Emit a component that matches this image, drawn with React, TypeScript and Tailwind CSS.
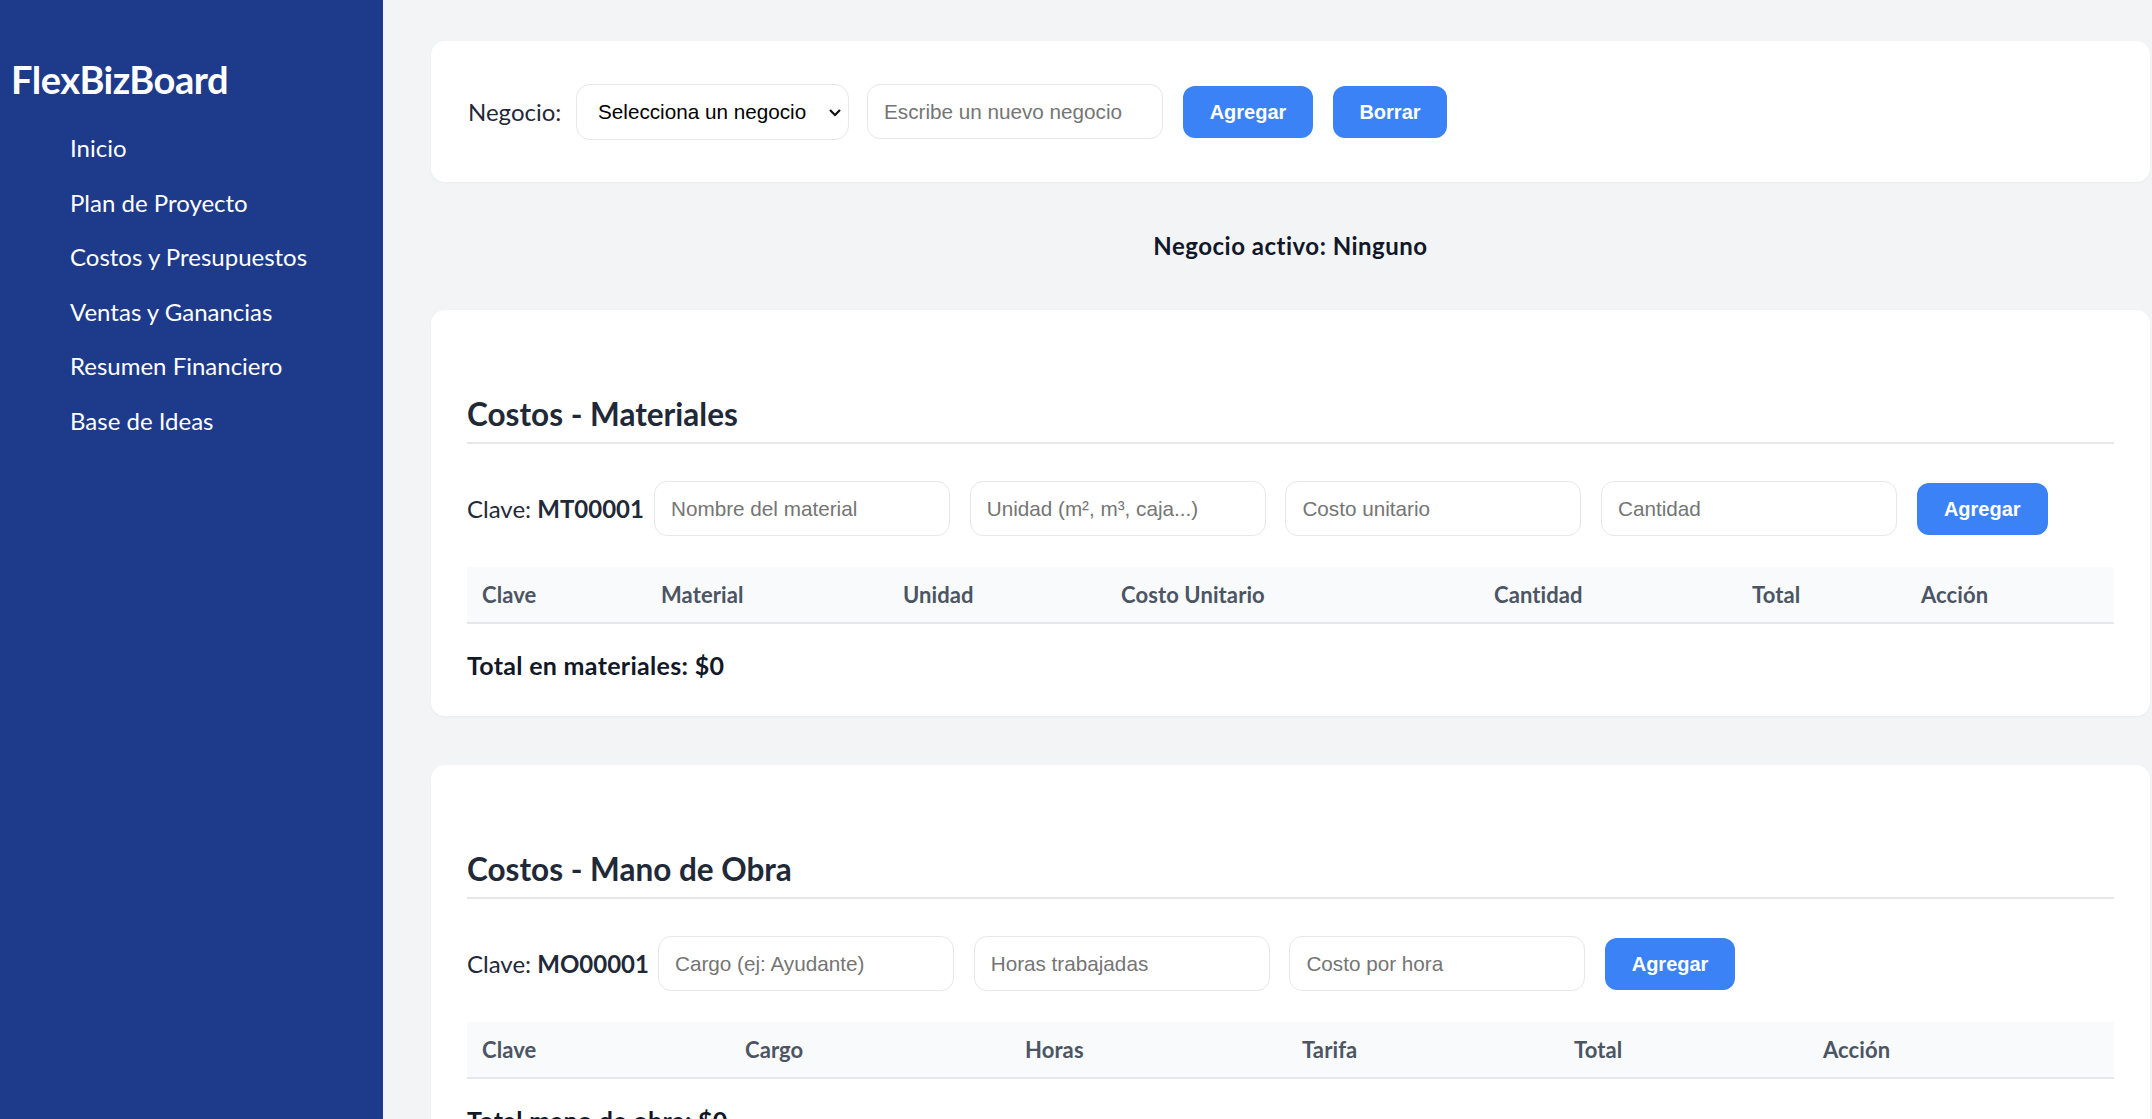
import React from "react";

const navItems = [
  "Inicio",
  "Plan de Proyecto",
  "Costos y Presupuestos",
  "Ventas y Ganancias",
  "Resumen Financiero",
  "Base de Ideas",
];

const materialCols = [
  { label: "Clave", w: "w-[179px]" },
  { label: "Material", w: "w-[242px]" },
  { label: "Unidad", w: "w-[218px]" },
  { label: "Costo Unitario", w: "w-[373px]" },
  { label: "Cantidad", w: "w-[258px]" },
  { label: "Total", w: "w-[169px]" },
  { label: "Acción", w: "w-[208px]" },
];

const laborCols = [
  { label: "Clave", w: "w-[263px]" },
  { label: "Cargo", w: "w-[280px]" },
  { label: "Horas", w: "w-[277px]" },
  { label: "Tarifa", w: "w-[272px]" },
  { label: "Total", w: "w-[249px]" },
  { label: "Acción", w: "w-[306px]" },
];

const arial = "font-['Liberation_Sans',Arial,sans-serif]";

function Field({ placeholder }: { placeholder: string }) {
  return (
    <input
      placeholder={placeholder}
      className={`h-[55px] w-[296px] rounded-[13px] border border-[#e5e7eb] bg-white px-[16px] ${arial} text-[20.7px] text-black outline-none placeholder:text-[#757575]`}
    />
  );
}

function BlueButton({ children, w }: { children: React.ReactNode; w: string }) {
  return (
    <button
      className={`h-[52px] ${w} rounded-[12px] bg-[#3b82f6] ${arial} text-[20px] font-bold text-white`}
    >
      {children}
    </button>
  );
}

function HeaderTable({ cols }: { cols: { label: string; w: string }[] }) {
  return (
    <table className="mt-[31px] w-full table-fixed border-collapse">
      <thead>
        <tr className="bg-[#f9fafb]">
          {cols.map((c) => (
            <th
              key={c.label}
              className={`${c.w} h-[56px] border-b-2 border-[#e5e7eb] pl-[15px] text-left text-[22px] font-bold tracking-[0.1px] text-[#4b5563]`}
            >
              {c.label}
            </th>
          ))}
        </tr>
      </thead>
      <tbody></tbody>
    </table>
  );
}

export default function App() {
  return (
    <div className="flex h-screen overflow-hidden bg-[#f3f4f6] font-['Lato','Noto_Sans',sans-serif] text-[#1f2937]">
      <aside className="w-[383px] shrink-0 bg-[#1e3a8a] pl-[11px] pt-[55px] text-white">
        <h1 className="text-[38px] font-bold leading-[48px] tracking-[-0.5px]">FlexBizBoard</h1>
        <ul className="mt-[18px] pl-[59px]">
          {navItems.map((item) => (
            <li key={item} className="text-[24px] leading-[54.6px]">
              {item}
            </li>
          ))}
        </ul>
      </aside>

      <main className="flex-1 pl-[48px] pr-[4px] pt-[41px]">
        <div className="flex h-[141px] items-center rounded-[14px] bg-white px-[37px] shadow-[0_1px_3px_rgba(0,0,0,0.04)]">
          <label className="w-[108px] text-[24px]">Negocio:</label>
          <div className="relative">
            <select
              className={`h-[56px] w-[273px] appearance-none rounded-[14px] border border-[#e5e7eb] bg-white pl-[21px] ${arial} text-[20.7px] text-black outline-none`}
            >
              <option>Selecciona un negocio</option>
            </select>
            <svg
              className="pointer-events-none absolute right-[7px] top-[24px] h-[9px] w-[14px]"
              viewBox="0 0 14 9"
              fill="none"
              stroke="#111"
              strokeWidth="2.2"
            >
              <path d="M2 2l5 5 5-5" />
            </svg>
          </div>
          <div className="ml-[18px]">
            <Field placeholder="Escribe un nuevo negocio" />
          </div>
          <div className="ml-[20px] flex gap-[20px]">
            <BlueButton w="w-[130px]">Agregar</BlueButton>
            <BlueButton w="w-[114px]">Borrar</BlueButton>
          </div>
        </div>

        <p className="my-[48px] text-center text-[24px] font-bold leading-[32px] tracking-[0.5px] text-[#111827]">
          Negocio activo: Ninguno
        </p>

        <section className="rounded-[14px] bg-white px-[36px] pb-[35px] pt-[36px] shadow-[0_1px_3px_rgba(0,0,0,0.04)]">
          <h2 className="mt-[48px] border-b-2 border-[#e5e7eb] pb-[8px] text-[31.5px] font-bold leading-[40px]">
            Costos - Materiales
          </h2>
          <div className="mt-[37px] flex items-center">
            <span className="w-[187px] text-[24px]">
              Clave: <b>MT00001</b>
            </span>
            <div className="flex items-center gap-[19.7px]">
              <Field placeholder="Nombre del material" />
              <Field placeholder="Unidad (m², m³, caja...)" />
              <Field placeholder="Costo unitario" />
              <Field placeholder="Cantidad" />
              <BlueButton w="w-[131px]">Agregar</BlueButton>
            </div>
          </div>
          <HeaderTable cols={materialCols} />
          <p className="mt-[25px] text-[25px] font-bold leading-[32px] tracking-[0.3px] text-[#111827]">
            Total en materiales: $0
          </p>
        </section>

        <section className="mt-[49px] rounded-[14px] bg-white px-[36px] pb-[35px] pt-[36px] shadow-[0_1px_3px_rgba(0,0,0,0.04)]">
          <h2 className="mt-[48px] border-b-2 border-[#e5e7eb] pb-[8px] text-[31.5px] font-bold leading-[40px]">
            Costos - Mano de Obra
          </h2>
          <div className="mt-[37px] flex items-center">
            <span className="w-[191px] text-[24px]">
              Clave: <b>MO00001</b>
            </span>
            <div className="flex items-center gap-[19.7px]">
              <Field placeholder="Cargo (ej: Ayudante)" />
              <Field placeholder="Horas trabajadas" />
              <Field placeholder="Costo por hora" />
              <BlueButton w="w-[130px]">Agregar</BlueButton>
            </div>
          </div>
          <HeaderTable cols={laborCols} />
          <p className="mt-[25px] text-[25px] font-bold leading-[32px] tracking-[0.3px] text-[#111827]">
            Total mano de obra: $0
          </p>
        </section>
      </main>
    </div>
  );
}
